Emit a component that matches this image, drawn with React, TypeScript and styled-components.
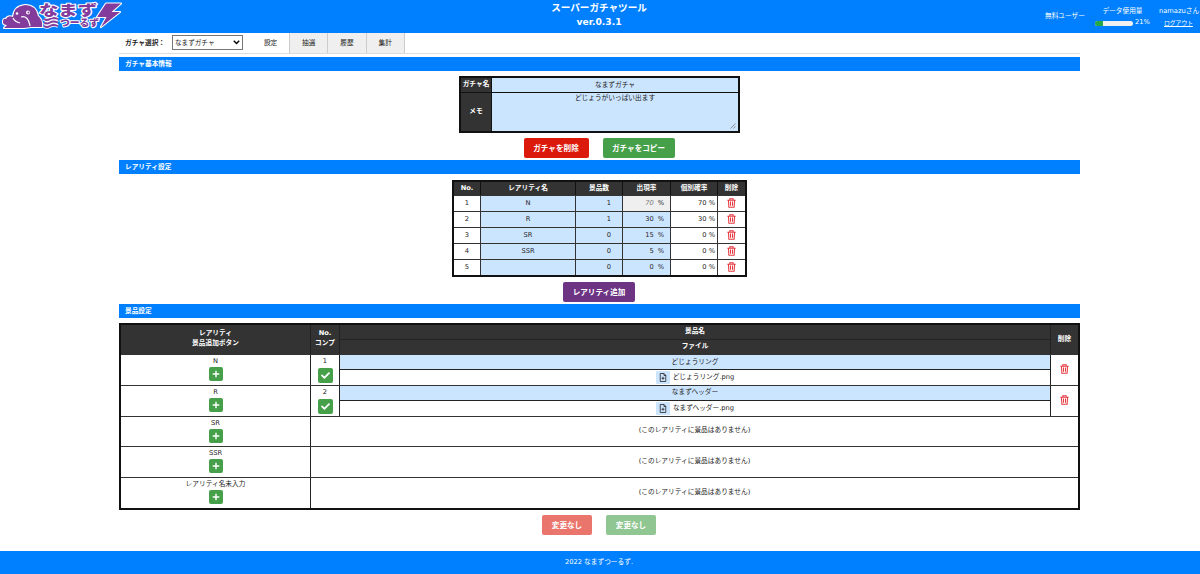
import styled, { createGlobalStyle } from "styled-components";
import { FaCheck } from "react-icons/fa";

const rarities = [
  { name: "N", count: 1, rate: 70, each: 70, auto: true },
  { name: "R", count: 1, rate: 30, each: 30 },
  { name: "SR", count: 0, rate: 15, each: 0 },
  { name: "SSR", count: 0, rate: 5, each: 0 },
  { name: "", count: 0, rate: 0, each: 0 },
];

const prizes = [
  { rarity: "N", no: 1, name: "どじょうリング", file: "どじょうリング.png" },
  { rarity: "R", no: 2, name: "なまずヘッダー", file: "なまずヘッダー.png" },
];

const emptyRarities = ["SR", "SSR", "レアリティ名未入力"];

const Logo = () => (
  <LogoBox>
    <LogoSvg viewBox="0 0 130 34">
      <g stroke="#fff" strokeWidth="2.2" strokeLinejoin="round" fill="#833c9b" paintOrder="stroke">
        <path d="M3 22Q3 18 6 19Q8 15 13 17Q14 6 25 5Q36 5 38 16Q43 20 42 27L31 27L24 28L4 28L7 25Q3 25 3 22Z" />
        <path d="M106 3.5L121 3.5L111.5 12L120 12L101 27L106.5 17L97 17Z" />
      </g>
      <path d="M13 18Q15 22 20 23M21 17Q28 15 30 26" fill="none" stroke="#fff" strokeWidth="1.2" />
      <circle cx="28" cy="12.5" r="2" fill="#fff" />
      <circle cx="28.4" cy="12.5" r="0.9" fill="#833c9b" />
      <circle cx="17" cy="13.5" r="1.3" fill="#fff" />
      <path
        d="M44 19Q47 21 50 19T58 19M44 22.5Q47 24.5 50 22.5T58 22.5M44 26Q47 28 50 26T58 26"
        fill="none"
        stroke="#fff"
        strokeWidth="3.6"
      />
      <path
        d="M44 19Q47 21 50 19T58 19M44 22.5Q47 24.5 50 22.5T58 22.5M44 26Q47 28 50 26T58 26"
        fill="none"
        stroke="#833c9b"
        strokeWidth="1.8"
      />
    </LogoSvg>
    <LogoWords>
      <LogoTop viewBox="0 0 62 14">
        <text x="1" y="12.3" fontSize="14" textLength="58" lengthAdjust="spacingAndGlyphs">
          なまず
        </text>
      </LogoTop>
      <LogoBottom viewBox="0 0 42 12">
        <text x="1" y="9" fontSize="9.5" textLength="39" lengthAdjust="spacingAndGlyphs">
          つーるず
        </text>
      </LogoBottom>
    </LogoWords>
  </LogoBox>
);

const FileIcon = () => (
  <svg width="8" height="9" viewBox="0 0 16 18" fill="none" stroke="#222" strokeWidth="1.6">
    <path d="M10 1H2.5V17H13.5V4.5ZM10 1V5H13.5M8 7.5V13.5M5 10.5H11" />
  </svg>
);

const PlusIcon = () => (
  <svg width="8" height="8" viewBox="0 0 8 8" stroke="#fff" strokeWidth="1.4">
    <path d="M4 0.7V7.3M0.7 4H7.3" />
  </svg>
);

const TrashIcon = () => (
  <TrashSvg viewBox="0 0 16 18" fill="none" stroke="#e5383f" strokeWidth="1.9">
    <path d="M0.5 4H15.5M5 4V1.5H11V4M2.5 4L3.3 16.5H12.7L13.5 4M6.2 6.5V14M9.8 6.5V14" />
  </TrashSvg>
);

const App = () => {
  return (
    <>
      <GlobalStyle />
      <Header>
        <Logo />
        <Title>
          スーパーガチャツール
          <br />
          <Version>ver.0.3.1</Version>
        </Title>
        <UserArea>
          <Plan>無料ユーザー</Plan>
          <Usage>
            <div>データ使用量</div>
            <UsageRow>
              <UsageBar>
                <UsageFill style={{ width: "21%" }} />
              </UsageBar>
              21%
            </UsageRow>
          </Usage>
          <Account>
            <div>namazuさん</div>
            <Logout>ログアウト</Logout>
          </Account>
        </UserArea>
      </Header>

      <Main>
        <TabRow>
          <SelectLabel>ガチャ選択：</SelectLabel>
          <GachaSelect>
            なまずガチャ
            <svg width="7" height="5" viewBox="0 0 7 5" fill="none" stroke="#000" strokeWidth="1.4">
              <path d="M0.8 0.8L3.5 3.6L6.2 0.8" />
            </svg>
          </GachaSelect>
          <Tab $active>設定</Tab>
          <Tab>抽選</Tab>
          <Tab>履歴</Tab>
          <Tab>集計</Tab>
        </TabRow>

        <SectionBar>ガチャ基本情報</SectionBar>
        <InfoTable>
          <HeadCell>ガチャ名</HeadCell>
          <InputCell>なまずガチャ</InputCell>
          <HeadCell>メモ</HeadCell>
          <MemoCell>
            どじょうがいっぱい出ます
            <Grip viewBox="0 0 6 6" stroke="#777" strokeWidth="0.8">
              <path d="M0.5 5.5L5.5 0.5M3.3 5.5L5.5 3.3" />
            </Grip>
          </MemoCell>
        </InfoTable>
        <ButtonRow $top={5} $gap={14}>
          <Button $color="#dc1a0c" $width={65}>ガチャを削除</Button>
          <Button $color="#45a049" $width={72}>ガチャをコピー</Button>
        </ButtonRow>

        <SectionBar $top={2}>レアリティ設定</SectionBar>
        <RarityTable>
          <RarityRow $head>
            <HeadCell>No.</HeadCell>
            <HeadCell>レアリティ名</HeadCell>
            <HeadCell>景品数</HeadCell>
            <HeadCell>出現率</HeadCell>
            <HeadCell>個別確率</HeadCell>
            <HeadCell>削除</HeadCell>
          </RarityRow>
          {rarities.map((rarity, index) => (
            <RarityRow key={index}>
              <NoCell>{index + 1}</NoCell>
              <InputCell>{rarity.name}</InputCell>
              <NumberCell>{rarity.count}</NumberCell>
              <RateCell $auto={rarity.auto}>
                <span>{rarity.rate}</span>
                <Percent>%</Percent>
              </RateCell>
              <EachCell>{rarity.each} %</EachCell>
              <TrashCell>
                <TrashIcon />
              </TrashCell>
            </RarityRow>
          ))}
        </RarityTable>
        <ButtonRow $top={5}>
          <Button $color="#6c3483" $width={72}>レアリティ追加</Button>
        </ButtonRow>

        <SectionBar $top={2}>景品設定</SectionBar>
        <PrizeTable>
          <PrizeRow>
            <HeadCell $lift={3}>
              レアリティ
              <br />
              景品追加ボタン
            </HeadCell>
            <HeadCell $lift={3}>
              No.
              <br />
              コンプ
            </HeadCell>
            <SplitCell>
              <HeadCell>景品名</HeadCell>
              <HeadCell>ファイル</HeadCell>
            </SplitCell>
            <HeadCell>削除</HeadCell>
          </PrizeRow>
          {prizes.map((prize) => (
            <PrizeRow key={prize.no}>
              <StackCell>
                {prize.rarity}
                <SquareButton>
                  <PlusIcon />
                </SquareButton>
              </StackCell>
              <StackCell>
                {prize.no}
                <SquareButton $size={15}>
                  <FaCheck />
                </SquareButton>
              </StackCell>
              <SplitCell>
                <InputCell>{prize.name}</InputCell>
                <Cell>
                  <FileButton>
                    <FileIcon />
                  </FileButton>
                  <FileName>{prize.file}</FileName>
                </Cell>
              </SplitCell>
              <TrashCell>
                <TrashIcon />
              </TrashCell>
            </PrizeRow>
          ))}
          {emptyRarities.map((name) => (
            <PrizeRow key={name} $empty>
              <StackCell>
                {name}
                <SquareButton>
                  <PlusIcon />
                </SquareButton>
              </StackCell>
              <EmptyCell>(このレアリティに景品はありません)</EmptyCell>
            </PrizeRow>
          ))}
        </PrizeTable>
        <ButtonRow $top={5} $gap={14}>
          <Button $color="#ea756d" $width={50}>変更なし</Button>
          <Button $color="#8fc692" $width={50}>変更なし</Button>
        </ButtonRow>
      </Main>
      <Footer>2022 なまずつーるず.</Footer>
    </>
  );
};

export default App;

const GlobalStyle = createGlobalStyle`
  * {
    box-sizing: border-box;
  }
  body {
    margin: 0;
    background-color: #fff;
    color: #222;
    font-family: "DejaVu Sans", "Noto Sans CJK JP", sans-serif;
    font-size: 6.7px;
    line-height: 10px;
    overflow: hidden;
  }
`;

const Header = styled.header`
  display: grid;
  grid-template-columns: 1fr 200px 1fr;
  height: 33px;
  background-color: #0080ff;
  color: #fff;
`;

const LogoBox = styled.div`
  display: grid;
  justify-items: start;
  height: 33px;
  overflow: hidden;

  > * {
    grid-area: 1 / 1;
  }
`;

const LogoSvg = styled.svg`
  display: block;
  width: 130px;
  height: 34px;
`;

const LogoWords = styled.div`
  display: flex;
  flex-direction: column;
  width: 100px;
  margin-left: 38px;
  padding-top: 3px;
`;

const LogoTop = styled.svg`
  display: block;
  width: 62px;
  height: 14px;
  overflow: visible;
  font-family: "Noto Sans CJK JP", sans-serif;
  font-weight: 900;
  fill: #833c9b;
  stroke: #fff;
  stroke-width: 2px;
  stroke-linejoin: round;
  paint-order: stroke;
`;

const LogoBottom = styled(LogoTop)`
  width: 42px;
  height: 12px;
  margin-left: 21px;
`;

const Title = styled.h1`
  margin: 0;
  padding: 1px 2px 0 0;
  font-size: 9.6px;
  line-height: 14px;
  font-weight: bold;
  text-align: center;
`;

const Version = styled.span`
  font-size: 9.2px;
`;

const UserArea = styled.div`
  display: flex;
  justify-content: flex-end;
  padding: 6px 2px 0 0;
  text-align: center;
  white-space: nowrap;
`;

const Plan = styled.div`
  padding-top: 5px;
  margin-right: 10px;
`;

const Usage = styled.div`
  width: 55px;
  margin-right: 9px;
`;

const UsageRow = styled.div`
  display: flex;
  align-items: center;
  gap: 2px;
  height: 12px;
`;

const UsageBar = styled.div`
  width: 38px;
  height: 5px;
  margin-top: 2px;
  border-radius: 3px;
  background-color: #f0f0f0;
  overflow: hidden;
`;

const UsageFill = styled.div`
  height: 100%;
  background-color: #28a745;
`;

const Account = styled.div`
  width: 39px;
`;

const Logout = styled.div`
  margin-top: 2px;
  font-size: 5.8px;
  text-decoration: underline;
`;

const Main = styled.main`
  width: 961px;
  height: 518px;
  margin: 0 auto 0 119px;
`;

const TabRow = styled.div`
  display: flex;
  align-items: flex-start;
  height: 21px;
  margin-bottom: 3px;
  border-bottom: 1px solid #ddd;
`;

const SelectLabel = styled.div`
  width: 53px;
  padding: 5px 0 0 6px;
  font-weight: bold;
  white-space: nowrap;
`;

const GachaSelect = styled.div`
  display: flex;
  align-items: center;
  justify-content: space-between;
  width: 71px;
  height: 15px;
  margin: 2px 9px 0 0;
  padding: 0 2px;
  border: 1px solid #767676;
  font-size: 6.6px;
`;

const Tab = styled.div<{ $active?: boolean }>`
  width: 38.2px;
  height: 20px;
  padding-top: 5px;
  border-right: 1px solid #ccc;
  background-color: ${(props) => (props.$active ? "#fff" : "#efefef")};
  text-align: center;
`;

const SectionBar = styled.h2<{ $top?: number }>`
  height: 14px;
  margin: ${(props) => props.$top || 0}px 0 0;
  padding: 1.6px 0 0 6px;
  background-color: #0080ff;
  color: #fff;
  font-size: 6.7px;
  line-height: 10px;
`;

const Cell = styled.div`
  display: flex;
  align-items: center;
  justify-content: center;
  min-width: 0;
  min-height: 0;
  background-color: #fff;
`;

const HeadCell = styled(Cell)<{ $lift?: number }>`
  padding-bottom: ${(props) => props.$lift || 2}px;
  background-color: #333;
  color: #fff;
  font-weight: bold;
  text-align: center;
`;

const InputCell = styled(Cell)`
  padding-bottom: 1px;
  background-color: #cce5ff;
`;

const TrashCell = styled(Cell)`
  padding-bottom: 1px;
`;

const Table = styled.div`
  display: grid;
  gap: 1px;
  border: 2px solid #111;
  background-color: #333;
`;

const InfoTable = styled(Table)`
  grid-template-columns: 30px 1fr;
  grid-template-rows: 14px 1fr;
  width: 281px;
  height: 57px;
  margin: 5px 0 0 340px;
  background-color: #111;
`;

const MemoCell = styled(InputCell)`
  position: relative;
  align-items: flex-start;
`;

const Grip = styled.svg`
  position: absolute;
  right: 2px;
  bottom: 2px;
  width: 6px;
  height: 6px;
`;

const ButtonRow = styled.div<{ $top: number; $gap?: number }>`
  display: flex;
  justify-content: center;
  gap: ${(props) => props.$gap || 0}px;
  margin-top: ${(props) => props.$top}px;
  padding-right: 1px;
`;

const Button = styled.button<{ $color: string; $width: number }>`
  width: ${(props) => props.$width}px;
  height: 20px;
  padding: 2px 0 0;
  border: 0;
  border-radius: 2px;
  background-color: ${(props) => props.$color};
  color: #fff;
  font-family: inherit;
  font-size: 7.6px;
  font-weight: bold;
  line-height: 10px;
  white-space: nowrap;
`;

const RarityTable = styled(Table)`
  width: 295px;
  height: 97px;
  margin: 6px 0 0 333px;
  grid-template-rows: 13px repeat(5, 1fr);
`;

const RarityRow = styled.div<{ $head?: boolean }>`
  display: grid;
  grid-template-columns: 26px 94px 46px 47px 46px 1fr;
  gap: 1px;
  background-color: ${(props) => (props.$head ? "#111" : "#333")};
`;

const NoCell = styled(Cell)`
  padding-bottom: 2px;
`;

const NumberCell = styled(InputCell)`
  justify-content: flex-end;
  padding-right: 11px;
`;

const RateCell = styled(InputCell)<{ $auto?: boolean }>`
  justify-content: flex-end;
  gap: 4px;
  padding-right: 6px;
  ${(props) => props.$auto && "background-color: #efefef;"}

  span:first-child {
    ${(props) => props.$auto && "font-style: italic; color: #777;"}
  }
`;

const Percent = styled.span`
  padding-bottom: 1px;
`;

const EachCell = styled(Cell)`
  justify-content: flex-end;
  padding: 0 2px 2px 0;
`;

const TrashSvg = styled.svg`
  width: 9px;
  height: 10px;
`;

const PrizeTable = styled(Table)`
  height: 187px;
  margin-top: 5px;
  grid-template-rows: 29px repeat(5, 1fr);
`;

const PrizeRow = styled.div<{ $empty?: boolean }>`
  display: grid;
  grid-template-columns: ${(props) =>
    props.$empty ? "189px 1fr" : "189px 28px 1fr 27px"};
  gap: 1px;
  background-color: #222;
`;

const SplitCell = styled.div`
  display: grid;
  grid-template-rows: 1fr 1fr;
  gap: 1px;
  background-color: #222;
`;

const StackCell = styled(Cell)`
  flex-direction: column;
  justify-content: flex-start;
  gap: 1px;
  padding-top: 1px;
`;

const SquareButton = styled.div<{ $size?: number }>`
  display: flex;
  align-items: center;
  justify-content: center;
  flex-shrink: 0;
  width: ${(props) => props.$size || 14}px;
  height: ${(props) => props.$size || 14}px;
  margin-top: ${(props) => (props.$size ? 1 : 0)}px;
  border-radius: 2px;
  background-color: #45a049;
  color: #fff;
  font-size: 9px;
`;

const FileButton = styled.div`
  display: flex;
  align-items: center;
  justify-content: center;
  width: 14px;
  height: 13px;
  margin-right: 3px;
  border-radius: 1px;
  background-color: #cce5ff;
`;

const FileName = styled.span`
  padding-bottom: 1px;
`;

const EmptyCell = styled(Cell)`
  padding-bottom: 2px;
`;

const Footer = styled.footer`
  height: 23px;
  padding: 6px 2px 0 0;
  background-color: #0080ff;
  color: #fff;
  text-align: center;
`;
